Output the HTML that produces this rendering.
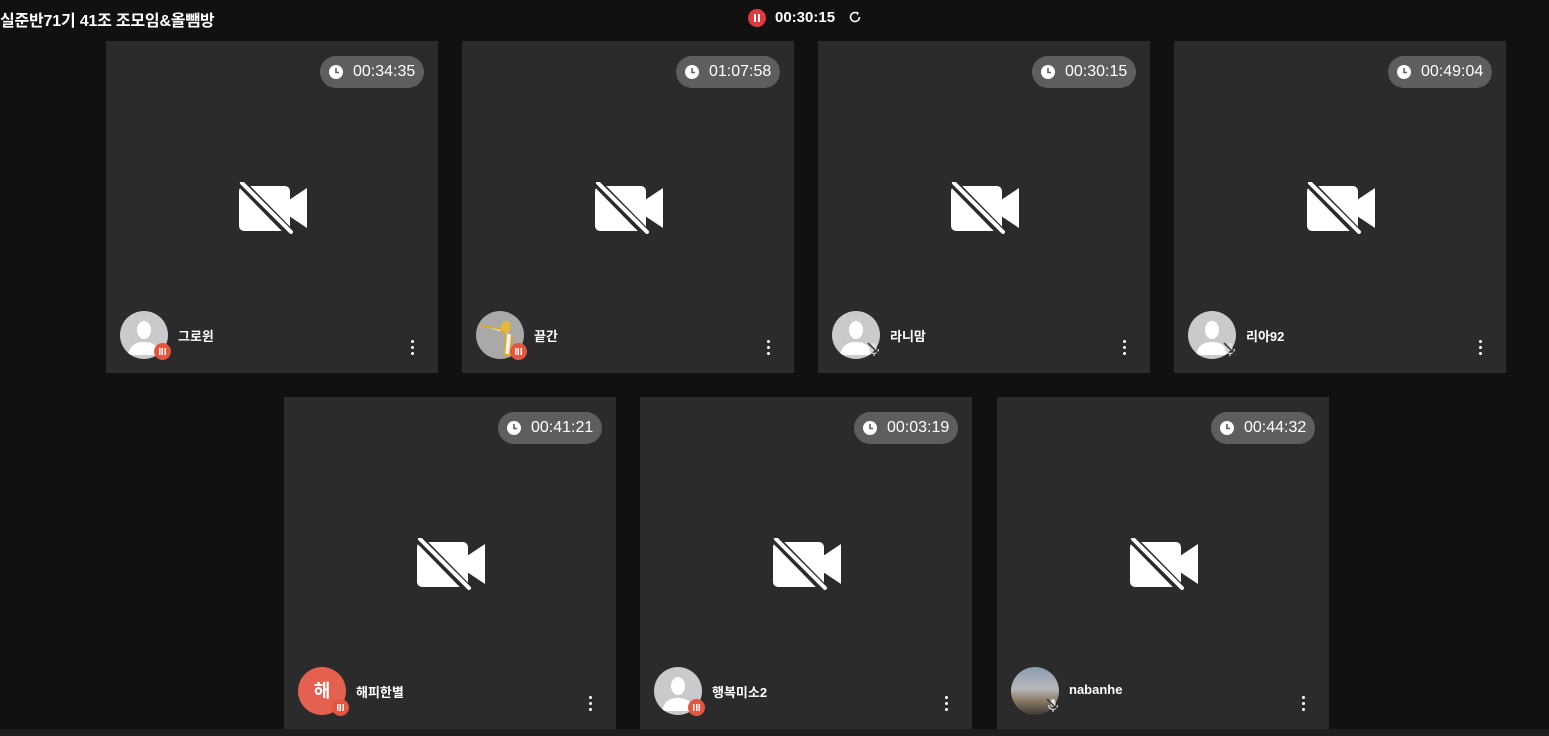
<!DOCTYPE html>
<html><head><meta charset="utf-8"><style>
*{margin:0;padding:0;box-sizing:border-box}
body{width:1549px;height:736px;background:#111;position:relative;overflow:hidden;font-family:"Liberation Sans","Noto Sans CJK KR",sans-serif;color:#fff}
.title{position:absolute;left:0;top:7px;font-size:16px;font-weight:bold;letter-spacing:-0.2px}
.rec{position:absolute;left:748px;top:9px;width:18px;height:18px;border-radius:50%;background:#e0393e}
.rec:before,.rec:after{content:"";position:absolute;top:5px;width:2px;height:8px;background:#fff}
.rec:before{left:6px}.rec:after{left:10px}
.rt{position:absolute;left:775px;top:9px;font-size:15px;font-weight:bold}
.tile{position:absolute;width:332px;height:332px;background:#2b2b2b}
.pill{position:absolute;right:14px;top:15px;height:32px;width:104px;border-radius:16px;background:#5e5e5e;font-size:16px;line-height:32px;padding-left:33px}
.pill svg{position:absolute;left:9px;top:9px}
.cam{position:absolute;left:133px;top:141px}
.av{position:absolute;left:14px;top:270px;width:48px;height:48px;border-radius:50%;background:#c9cacc;overflow:hidden}
.badge{position:absolute;left:48px;top:302px;width:17px;height:17px;border-radius:50%;background:#e4573e}
.badge:before{content:"";position:absolute;left:5px;top:5px;width:7px;height:7px;background:linear-gradient(90deg,#fff 0 1.5px,transparent 1.5px 2.75px,#fff 2.75px 4.25px,transparent 4.25px 5.5px,#fff 5.5px)}
.mute{position:absolute;left:48px;top:300px}
.name{position:absolute;left:72px;top:285px;font-size:13px;font-weight:bold}
.dots{position:absolute;left:305px;top:299px;width:4px}
.dots i{display:block;width:3px;height:3px;border-radius:50%;background:#fff;margin-bottom:3px}
.strip{position:absolute;left:0;top:729px;width:1549px;height:7px;background:#1e1e1e}
</style></head><body>
<div class="title">실준반71기 41조 조모임&amp;올뺌방</div>
<div class="rec"></div><div class="rt">00:30:15</div>
<svg style="position:absolute;left:848px;top:10px" width="14" height="14" viewBox="0 0 14 14"><path d="M11.5 7A4.5 4.5 0 1 1 9.5 3.3" fill="none" stroke="#fff" stroke-width="1.5"/><path d="M8 1.5L11 2.8 9.5 5.5z" fill="#fff"/></svg>

<svg width="0" height="0" style="position:absolute"><defs>
<symbol id="cam" viewBox="0 0 68 52"><rect x="0" y="4" width="51" height="45" rx="5" fill="#fff"/><path d="M50 18L68 6V46L50 34z" fill="#fff"/><path d="M1 0L53 53" stroke="#2b2b2b" stroke-width="9"/><path d="M3 1L52 50" stroke="#fff" stroke-width="4" stroke-linecap="round"/></symbol>
<symbol id="clk" viewBox="0 0 14 14"><circle cx="7" cy="7" r="7" fill="#fff"/><path d="M7 3v4.5h3" fill="none" stroke="#5e5e5e" stroke-width="1.6"/></symbol>
<symbol id="person" viewBox="0 0 48 48"><ellipse cx="24" cy="19" rx="7" ry="9" fill="#fff"/><path d="M8 44c2-10 8-13 16-13s14 3 16 13z" fill="#fff"/></symbol>
<symbol id="mic" viewBox="0 0 16 16"><rect x="5.5" y="2" width="5" height="8" rx="2.5" fill="#ddd"/><path d="M3.5 8a4.5 4.5 0 0 0 9 0M8 12.5V15" fill="none" stroke="#ddd" stroke-width="1.2"/><path d="M2 2l12 12" stroke="#333" stroke-width="1.5"/></symbol>
</defs></svg>

<!-- row 1 -->
<div class="tile" style="left:106px;top:41px"><div class="pill"><svg width="14" height="14"><use href="#clk"/></svg>00:34:35</div><svg class="cam" width="68" height="52"><use href="#cam"/></svg><div class="av"><svg width="48" height="48"><use href="#person"/></svg></div><div class="badge"></div><div class="name">그로윈</div><div class="dots"><i></i><i></i><i></i></div></div>
<div class="tile" style="left:462px;top:41px"><div class="pill"><svg width="14" height="14"><use href="#clk"/></svg>01:07:58</div><svg class="cam" width="68" height="52"><use href="#cam"/></svg><div class="av" style="background:#a9a9a9"><svg width="48" height="48"><ellipse cx="30" cy="16" rx="5" ry="6" fill="#e8b83c"/><path d="M4 14l20 4 6 6-2 20h6l2-20" fill="#f0f0f0" stroke="#d9a830" stroke-width="2"/></svg></div><div class="badge"></div><div class="name">끝간</div><div class="dots"><i></i><i></i><i></i></div></div>
<div class="tile" style="left:818px;top:41px"><div class="pill"><svg width="14" height="14"><use href="#clk"/></svg>00:30:15</div><svg class="cam" width="68" height="52"><use href="#cam"/></svg><div class="av"><svg width="48" height="48"><use href="#person"/></svg></div><svg class="mute" width="16" height="16"><use href="#mic"/></svg><div class="name">라니맘</div><div class="dots"><i></i><i></i><i></i></div></div>
<div class="tile" style="left:1174px;top:41px"><div class="pill"><svg width="14" height="14"><use href="#clk"/></svg>00:49:04</div><svg class="cam" width="68" height="52"><use href="#cam"/></svg><div class="av"><svg width="48" height="48"><use href="#person"/></svg></div><svg class="mute" width="16" height="16"><use href="#mic"/></svg><div class="name">리아92</div><div class="dots"><i></i><i></i><i></i></div></div>
<!-- row 2 -->
<div class="tile" style="left:284px;top:397px"><div class="pill"><svg width="14" height="14"><use href="#clk"/></svg>00:41:21</div><svg class="cam" width="68" height="52"><use href="#cam"/></svg><div class="av" style="background:#e4604f;text-align:center;line-height:48px;font-size:18px;font-weight:bold">해</div><div class="badge"></div><div class="name">해피한별</div><div class="dots"><i></i><i></i><i></i></div></div>
<div class="tile" style="left:640px;top:397px"><div class="pill"><svg width="14" height="14"><use href="#clk"/></svg>00:03:19</div><svg class="cam" width="68" height="52"><use href="#cam"/></svg><div class="av"><svg width="48" height="48"><use href="#person"/></svg></div><div class="badge"></div><div class="name">행복미소2</div><div class="dots"><i></i><i></i><i></i></div></div>
<div class="tile" style="left:997px;top:397px"><div class="pill"><svg width="14" height="14"><use href="#clk"/></svg>00:44:32</div><svg class="cam" width="68" height="52"><use href="#cam"/></svg><div class="av" style="background:linear-gradient(180deg,#8a9bb0 0%,#b7b9bb 45%,#8a7a64 70%,#3d3a34 100%)"></div><svg class="mute" width="16" height="16"><use href="#mic"/></svg><div class="name">nabanhe</div><div class="dots"><i></i><i></i><i></i></div></div>
<div class="strip"></div>
</body></html>
